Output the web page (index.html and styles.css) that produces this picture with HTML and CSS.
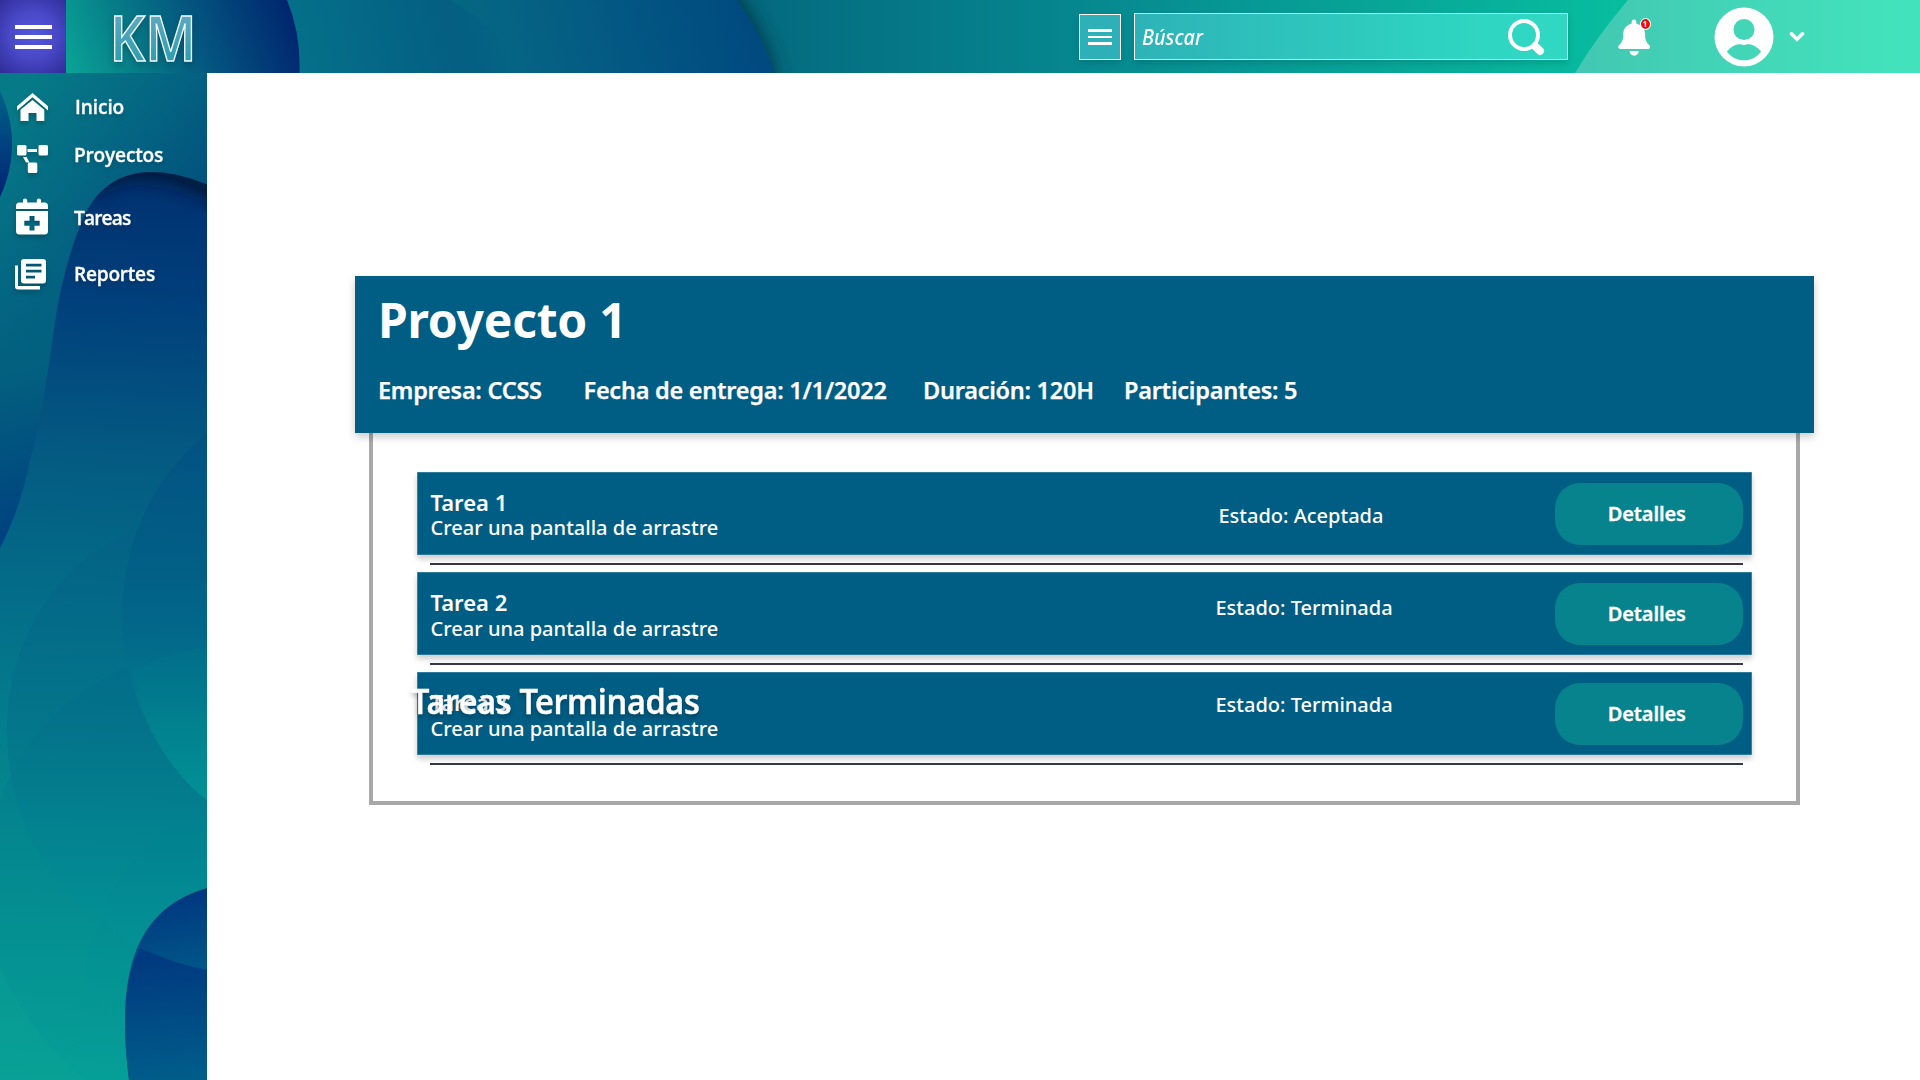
FILE: index.html
```html
<!DOCTYPE html>
<html lang="es">
<head>
<meta charset="utf-8">
<title>KM - Proyecto 1</title>
<link rel="stylesheet" href="styles.css">
</head>
<body>
<header class="topbar">
  <svg class="backdrop" viewBox="0 0 1920 73" preserveAspectRatio="none" aria-hidden="true">
    <defs>
      <linearGradient id="h-base" gradientUnits="userSpaceOnUse" x1="770" y1="0" x2="1620" y2="0"><stop offset="0" stop-color="#046b80"/><stop offset=".35" stop-color="#06868f"/><stop offset=".7" stop-color="#07a497"/><stop offset="1" stop-color="#07bd9f"/></linearGradient>
      <linearGradient id="h-mid" gradientUnits="userSpaceOnUse" x1="440" y1="80" x2="740" y2="0"><stop offset="0" stop-color="#04697f"/><stop offset=".3" stop-color="#056284"/><stop offset="1" stop-color="#004a80"/></linearGradient>
      <linearGradient id="h-fold" gradientUnits="userSpaceOnUse" x1="290" y1="60" x2="500" y2="10"><stop offset="0" stop-color="#04718a"/><stop offset=".75" stop-color="#045f83"/><stop offset="1" stop-color="#056383"/></linearGradient>
      <linearGradient id="h-navy" gradientUnits="userSpaceOnUse" x1="60" y1="73" x2="285" y2="-10"><stop offset="0" stop-color="#0aa898"/><stop offset=".28" stop-color="#078089"/><stop offset=".6" stop-color="#04557f"/><stop offset="1" stop-color="#00256f"/></linearGradient>
      <linearGradient id="h-light" gradientUnits="userSpaceOnUse" x1="1580" y1="0" x2="1900" y2="0"><stop offset="0" stop-color="#42c8b3"/><stop offset="1" stop-color="#42e3bc"/></linearGradient>
      <filter id="h-soft" x="-10%" y="-100%" width="130%" height="300%"><feGaussianBlur stdDeviation="9"/></filter>
    </defs>
    <rect width="1920" height="73" fill="url(#h-base)"/>
    <path d="M600-20H727Q763 22 775 73V95H600z" fill="#022f3c" opacity=".8" filter="url(#h-soft)"/>
    <path d="M290 0H737Q762 34 775 73H290z" fill="url(#h-mid)"/>
    <path d="M280 0H450Q505 32 523 73H280z" fill="url(#h-fold)"/>
    <path d="M60 0H287Q301 34 299.500 73H60z" fill="url(#h-navy)"/>
    <path d="M1628 0H1920V73H1575Q1598 35 1628 0z" fill="url(#h-light)"/>
  </svg>
  <button class="menu-btn" aria-label="Menú"><i></i><i></i><i></i></button>
  <svg class="logo" viewBox="0 0 90 60" role="img" aria-label="KM">
    <defs><linearGradient id="km" x1="0" y1="0" x2="0" y2="1"><stop offset=".2" stop-color="#64a9c3"/><stop offset=".8" stop-color="#2c9daf"/></linearGradient></defs>
    <text x="-1.500" y="53.500" textLength="87" lengthAdjust="spacingAndGlyphs">KM</text>
  </svg>
  <div class="tools">
    <button class="list-btn" aria-label="Lista"><i></i><i></i><i></i></button>
    <div class="search">
      <span>Búscar</span>
      <svg width="38" height="38" viewBox="0 0 38 38" fill="none" stroke="#fff"><circle cx="17" cy="17" r="14" stroke-width="4"/><path d="M28.500 28.500l4.500 4.500" stroke-width="8" stroke-linecap="round"/></svg>
    </div>
    <div class="bell">
      <svg width="33" height="37" viewBox="0 0 33 37" fill="#fff"><path d="M16 .500c-1.500 0-2.300 1-2.300 2.400v1.500C8 6 5.300 10 5.300 15c0 6-1.500 8.500-4.200 11.200-.7.700-.8 1.400-.8 1.900 0 1.100.7 1.900 1.900 1.900h28c1.200 0 1.900-.8 1.900-1.900 0-.5-.2-1.200-.8-1.900C28.500 23.500 27 21 27 15c0-5-3-9-8.700-10.600V2.900C18.300 1.500 17.500.500 16 .500zM11.500 32a4.700 4.700 0 009.400 0z"/></svg>
      <b class="badge">1</b>
    </div>
    <svg class="avatar" width="60" height="60" viewBox="0 0 60 60"><path fill="#fff" fill-rule="evenodd" d="M30 .500a29.500 29.500 0 110 59 29.500 29.500 0 010-59zM30 12a10.500 10.500 0 100 21 10.500 10.500 0 000-21zM12.800 44.500C17 50 23 53.300 30 53.300S43 50 47.200 44.500C43 40 39 37.200 35 37.200c-1.700 0-3 .7-5 .7s-3.300-.7-5-.7c-4 0-8 2.800-12.200 7.300z"/></svg>
    <svg class="chevron" width="16" height="12" viewBox="0 0 16 12" fill="none" stroke="#fff" stroke-width="3.600" stroke-linecap="round"><path d="M2.500 2.800L8 8.200l5.500-5.400"/></svg>
  </div>
</header>
<div class="shell">
  <nav class="sidebar">
    <svg class="backdrop" viewBox="0 73 207 1007" preserveAspectRatio="none" aria-hidden="true">
      <defs>
        <linearGradient id="s-top" gradientUnits="userSpaceOnUse" x1="20" y1="90" x2="230" y2="250"><stop offset="0" stop-color="#067b87"/><stop offset=".45" stop-color="#046482"/><stop offset="1" stop-color="#00457b"/></linearGradient>
        <linearGradient id="s-left" gradientUnits="userSpaceOnUse" x1="0" y1="240" x2="75" y2="520"><stop offset="0" stop-color="#036a84" stop-opacity="0"/><stop offset=".45" stop-color="#03607f"/><stop offset="1" stop-color="#00427f"/></linearGradient>
        <linearGradient id="s-blob" gradientUnits="userSpaceOnUse" x1="115" y1="170" x2="75" y2="1080"><stop offset="0" stop-color="#00306f"/><stop offset=".14" stop-color="#003f7b"/><stop offset=".32" stop-color="#045b82"/><stop offset=".5" stop-color="#03708a"/><stop offset=".72" stop-color="#058a8e"/><stop offset="1" stop-color="#08a196"/></linearGradient>
        <linearGradient id="s-a" gradientUnits="userSpaceOnUse" x1="0" y1="433" x2="0" y2="800"><stop offset="0" stop-color="#004e81" stop-opacity=".6"/><stop offset=".35" stop-color="#005886" stop-opacity=".5"/><stop offset=".58" stop-color="#026a8b" stop-opacity=".85"/><stop offset=".8" stop-color="#02808f"/><stop offset="1" stop-color="#029296"/></linearGradient>
        <linearGradient id="s-b" gradientUnits="userSpaceOnUse" x1="0" y1="550" x2="0" y2="970"><stop offset="0" stop-color="#035b84" stop-opacity=".25"/><stop offset=".4" stop-color="#036d89" stop-opacity=".5"/><stop offset="1" stop-color="#029898" stop-opacity=".85"/></linearGradient>
        <linearGradient id="s-c" gradientUnits="userSpaceOnUse" x1="0" y1="640" x2="0" y2="1080"><stop offset="0" stop-color="#00658a" stop-opacity=".35"/><stop offset="1" stop-color="#029c97" stop-opacity=".4"/></linearGradient>
        <linearGradient id="s-d" gradientUnits="userSpaceOnUse" x1="0" y1="810" x2="0" y2="1080"><stop offset="0" stop-color="#00808e" stop-opacity=".35"/><stop offset="1" stop-color="#02959a" stop-opacity="0"/></linearGradient>
        <linearGradient id="s-n1" gradientUnits="userSpaceOnUse" x1="170" y1="895" x2="185" y2="985"><stop offset="0" stop-color="#003780"/><stop offset="1" stop-color="#005c8a"/></linearGradient>
        <linearGradient id="s-n2" gradientUnits="userSpaceOnUse" x1="160" y1="960" x2="170" y2="1080"><stop offset="0" stop-color="#003a80"/><stop offset="1" stop-color="#005d8a"/></linearGradient>
        <linearGradient id="s-dot" x1="0" y1="0" x2="0" y2="1"><stop offset="0" stop-color="#00618a"/><stop offset="1" stop-color="#002473"/></linearGradient>
        <filter id="s-soft" x="-30%" y="-60%" width="160%" height="220%"><feGaussianBlur stdDeviation="9"/></filter>
        <clipPath id="blob"><path d="M215 188Q180 172 152 172C110 172 90 199 80 226C68 256 60 290 56 316C48 368 42 420 30 460Q20 510 0 548V1090H215z"/></clipPath>
      </defs>
      <rect y="73" width="207" height="1007" fill="url(#s-top)"/>
      <rect y="240" width="100" height="320" fill="url(#s-left)"/>
      <path d="M0 91C16 125 16 163 0 197z" fill="url(#s-dot)"/>
      <g clip-path="url(#blob)">
        <rect y="160" width="207" height="920" fill="url(#s-blob)"/>
        <path d="M90 185Q115 163 155 168Q190 173 225 195" fill="none" stroke="#001230" stroke-width="24" opacity=".85" filter="url(#s-soft)"/>
        <path d="M207 648C140 651 35 695 0 800V967Q30 1035 85 1080H207z" fill="url(#s-c)"/>
        <path d="M207 510C60 530 7 640 7 728C7 860 90 940 207 970z" fill="url(#s-b)"/>
        <path d="M207 433C145 485 122.500 550 122.500 616C122.500 690 160 765 207 800z" fill="url(#s-a)"/>
        <path d="M207 648Q175 649 133 670Q150 750 207 800z" fill="#009390" opacity=".1"/>
        <path d="M207 807C130 835 75 915 76 1080H207z" fill="url(#s-d)"/>
        <path d="M207 888C145 906 125 955 125 1021Q125 1050 129 1080H207z" fill="url(#s-n1)"/>
        <path d="M140 948Q125 975 125 1021Q125 1050 129 1080H207V970Q175 964 140 948z" fill="url(#s-n2)"/>
      </g>
    </svg>
    <a class="item home"><svg width="32" height="29" viewBox="0 0 32 29" fill="#fff"><path d="M0 13.200L15.500 0 31 13.200v4.200L15.500 4.300 0 17.400z"/><path d="M3.500 16.800L15.500 7l11.800 9.800V28h-7.800v-8h-8v8h-8z"/></svg><span>Inicio</span></a>
    <a class="item projects"><svg width="32" height="29" viewBox="0 0 32 29" fill="#fff"><rect y="0" width="9.500" height="10.500" rx="1.500"/><rect x="21.500" width="9.500" height="10.500" rx="1.500"/><rect x="10.800" y="17.500" width="9.500" height="10.500" rx="1.500"/><path d="M10.500 4H20v3H10.500zM6 12h3.500l3 5.500H9z"/></svg><span>Proyectos</span></a>
    <a class="item tasks"><svg width="32" height="37" viewBox="0 0 32 37" fill="#fff"><path d="M0 11V8q0-3.500 3.500-3.500H7V2q0-1.500 2-1.500t2.200 1.500v2.500h9.600V2q0-1.500 2-1.500T25 2v2.500h3.500Q32 4.500 32 8v3z"/><path fill-rule="evenodd" d="M0 13h32v20q0 3.500-3.500 3.500h-25Q0 36.500 0 33zM13.500 18v4.700H8.300v5h5.200v4.800h5v-4.800h5.200v-5h-5.200V18z"/></svg><span>Tareas</span></a>
    <a class="item reports"><svg width="32" height="31" viewBox="0 0 32 31" fill="#fff"><path d="M0 6.500h3V27h22v3.500H3Q0 30.500 0 27.500z"/><path fill-rule="evenodd" d="M9 0h19q3 0 3 3v18.500q0 3-3 3H9q-3 0-3-3V3q0-3 3-3zM11 4.800v2.700h15.500V4.800zm0 6v2.700h15.500v-2.700zm0 6v2.700h9v-2.700z"/></svg><span>Reportes</span></a>
  </nav>
  <main class="content">
    <section class="project">
      <h1>Proyecto 1</h1>
      <div class="facts"><span class="f1">Empresa: CCSS</span><span class="f2">Fecha de entrega: 1/1/2022</span><span class="f3">Duración: 120H</span><span>Participantes: 5</span></div>
    </section>
    <section class="task-list">
      <article class="task first">
        <div class="info"><h3>Tarea 1</h3><p>Crear una pantalla de arrastre</p></div>
        <span class="status">Estado: Aceptada</span>
        <button class="details">Detalles</button>
      </article>
      <hr>
      <article class="task second">
        <div class="info"><h3>Tarea 2</h3><p>Crear una pantalla de arrastre</p></div>
        <span class="status">Estado: Terminada</span>
        <button class="details">Detalles</button>
      </article>
      <hr>
      <article class="task third">
        <div class="info"><h3>Tarea 3</h3><p>Crear una pantalla de arrastre</p></div>
        <span class="status">Estado: Terminada</span>
        <button class="details">Detalles</button>
        <h2 class="finished"><span>T</span>areas <span>T</span>erminadas</h2>
      </article>
      <hr>
    </section>
  </main>
</div>
</body>
</html>
```
FILE: styles.css
```css
* { box-sizing: border-box; }
body { margin: 0; background: #fff; color: #fff; font-family: "Noto Sans", sans-serif; overflow: hidden; }
h1, h2, h3, p { margin: 0; }
button { border: 0; padding: 0; color: inherit; font-family: inherit; }
.backdrop { position: absolute; inset: 0; width: 100%; height: 100%; z-index: -1; }

.topbar { position: relative; z-index: 0; height: 73px; display: flex; align-items: center; }
.menu-btn { width: 66px; height: 73px; padding: 1px 14px 0 15px; display: flex; flex-direction: column; justify-content: center; gap: 6px; background: radial-gradient(circle at 50% 48%, #5158dc 0%, #4a49c8 45%, #2e2b96 100%); }
.menu-btn i { height: 4px; background: #fff; }
.logo { width: 90px; height: 60px; margin: 0 0 0 45px; overflow: visible; filter: drop-shadow(0 3px 3px #0003); }
.logo text { font: 600 64px "Noto Sans", sans-serif; fill: url(#km); stroke: #f2fbfc; stroke-width: 1.5; }
.tools { margin-left: auto; display: flex; align-items: center; padding-right: 115px; }
.list-btn { width: 42px; height: 46px; margin: 1px 13px 0 0; padding: 0 8px; border: 1px solid #fff; background: #2db0b7; display: flex; flex-direction: column; justify-content: center; gap: 4px; box-shadow: 0 3px 6px #0002; }
.list-btn i { height: 2.400px; background: #fff; }
.search { width: 434px; height: 47px; padding: 0 22px 0 7px; border: 1px solid #c5f0ea; border-right-color: #fff; border-left-color: #fff; display: flex; align-items: center; justify-content: space-between; background: linear-gradient(90deg, #2db3b7, #2fd7c2 82%, #30d8c2); box-shadow: 0 3px 6px #0002; }
.search span { font-size: 21.500px; font-style: italic; font-weight: 500; transform: scaleX(.92); transform-origin: 0 50%; }
.bell { position: relative; height: 37px; margin: 1px 0 0 50px; }
.bell svg, .avatar, .chevron { display: block; }
.badge { position: absolute; left: 22.500px; top: 0; width: 9px; height: 10px; border-radius: 50%; background: #f00; outline: 1px solid #fff; font-size: 8px; line-height: 10px; text-align: center; }
.avatar { margin-left: 63px; }
.chevron { margin: 1px 0 0 15px; }

.shell { display: flex; height: 1007px; }
.sidebar { position: relative; z-index: 0; width: 207px; padding: 18px 0 0 15px; display: flex; flex-direction: column; }
.item { display: flex; align-items: center; font: 600 20px/28px "Open Sans", sans-serif; text-shadow: 0 3px 5px #0003; -webkit-text-stroke: .3px #fff; }
.item svg { flex: none; filter: drop-shadow(0 3px 2px #0003); }
.item span { transform: scaleX(.955); transform-origin: 0 50%; }
.home { height: 32px; padding-left: 2px; gap: 25.500px; letter-spacing: -.1px; }
.projects { height: 48px; margin-top: 8px; padding-left: 2px; gap: 24.500px; align-items: flex-start; line-height: 48px; letter-spacing: -.2px; }
.projects svg { margin-top: 14px; }
.tasks { height: 54px; margin-top: 10px; padding-left: 1px; gap: 25.500px; letter-spacing: -.9px; }
.tasks span { padding-top: 4px; }
.reports { height: 40px; margin-top: 11px; gap: 26.500px; letter-spacing: -.25px; }

.content { flex: 1; padding: 203px 106px 0 148px; }
.project { position: relative; height: 157px; padding: 11px 23px 0; background: #005d84; box-shadow: 0 4px 8px #0003; }
h1 { font-size: 48px; font-weight: 700; line-height: 65px; letter-spacing: -.25px; }
.facts { display: flex; margin-top: 20px; font-size: 23.500px; font-weight: 600; line-height: 36px; letter-spacing: -.26px; white-space: nowrap; -webkit-text-stroke: .25px #fff; }
.f1 { width: 205.500px; }
.f2 { width: 339.500px; }
.f3 { width: 201px; }
.task-list { height: 372px; margin: 0 14px; padding: 39.300px 44px 0 44.300px; border: 4px solid #a8a8a8; border-top: 0; }
.task { position: relative; height: 82.400px; padding: 10.300px 9.500px 0 13.200px; display: flex; background: #005d84; box-shadow: 0 4px 6px #0003, inset 0 0 0 .6px #5f9ab1; }
.info { flex: none; width: 788px; padding-top: 4px; }
h3 { font-size: 22px; font-weight: 600; line-height: 30px; }
.info p { font-size: 20.050px; font-weight: 500; line-height: 28px; margin-top: -2px; }
.first .info p { margin-top: -3px; }
.status { font-size: 20px; font-weight: 500; line-height: 28px; margin-top: 19px; }
.second .info, .third .info { width: 785px; }
.second .status { margin-top: 11px; }
.third .status { margin-top: 8px; }
.details { width: 187.500px; height: 62.700px; margin-left: auto; padding-right: 4px; border-radius: 25px; background: #07838d; font-size: 20px; font-weight: 600; letter-spacing: -.1px; -webkit-text-stroke: .3px #fff; }
.finished { position: absolute; left: -6px; top: 5px; font: 600 34.500px/48px "Open Sans", sans-serif; letter-spacing: -.35px; text-shadow: 0 3px 6px #0005; white-space: nowrap; transform: scaleX(.943); transform-origin: 0 50%; -webkit-text-stroke: .5px #fff; }
.finished span { letter-spacing: -3px; }
hr { height: 2px; margin: 8px 9px 7.600px 13px; border: 0; background: #36364c; }
```
